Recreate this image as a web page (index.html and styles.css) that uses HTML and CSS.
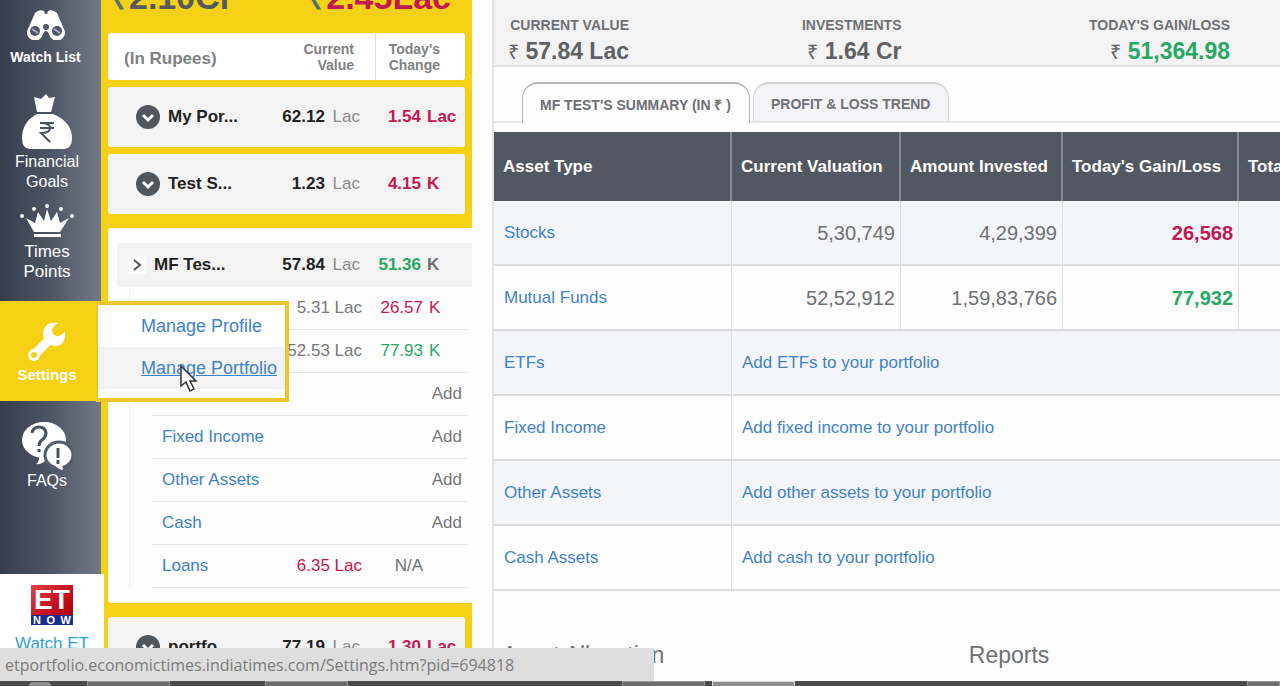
FILE: index.html
```html
<!DOCTYPE html>
<html lang="en">
<head>
	<meta charset="UTF-8">
	<title>ET Portfolio</title>
	<link rel="stylesheet" href="styles.css">
</head>
<body>
	<div id="page">
		<ul id="nav">
			<li class="watch">
				<a href="#">
					<svg width="38" height="30" viewBox="0 0 38 30"><path fill="#fff" d="M8 3q4-4 9-2l1 3h2l1-3q5-2 9 2l7 16a8 8 0 1 1-15 5q-1-3-3-3t-3 3a8 8 0 1 1-15-5z"/><circle cx="8" cy="21" r="5" fill="#4e5767"/><circle cx="30" cy="21" r="5" fill="#4e5767"/><circle cx="19" cy="17" r="3" fill="#4e5767"/><path d="M5 19l6 4M27 19l6 4" stroke="#aab" stroke-width="2"/></svg>
					<b>Watch List</b>
				</a>
			</li>
			<li class="goals">
				<a href="#">
					<svg width="52" height="56" viewBox="0 0 52 56"><path fill="#fff" d="M16 18L13 3l7 2 5-5 3 4 6-1-4 15zM16 20h16q19 8 19 24 0 11-8 11H9q-8 0-8-11 0-16 15-24z"/><path d="M19 29h14M19 34h14M20 29q9 0 9 5t-9 5l9 9" fill="none" stroke="#4a5261" stroke-width="2"/></svg>
					<span>Financial<br>Goals</span>
				</a>
			</li>
			<li class="points">
				<a href="#">
					<svg width="54" height="34" viewBox="0 0 54 34"><path fill="#fff" d="M6 14l9 5 3-11 6 9 3-12 4 12 6-9 3 11 9-5-9 14H14zM14 30h27v3H14z"/><g fill="#fff"><circle cx="2" cy="12" r="2"/><circle cx="14" cy="5" r="2"/><circle cx="27" cy="2" r="2"/><circle cx="41" cy="5" r="2"/><circle cx="52" cy="12" r="2"/></g></svg>
					<span>Times<br>Points</span>
				</a>
			</li>
			<li class="settings">
				<a href="#">
					<svg width="40" height="40" viewBox="0 0 40 40"><path d="M7 33L23 17" stroke="#fff" stroke-width="9"/><circle cx="7" cy="33" r="6" fill="#fff"/><path fill="#fff" d="M31 1q-10-2-14 6-3 8 3 14 6 5 13 2 6-4 5-13-6 5-9 4-4-2-4-6 1-4 6-7z"/><circle cx="7" cy="33" r="3" fill="#f4d114"/></svg>
					<b>Settings</b>
				</a>
				<div id="menu">
					<a href="#">Manage Profile</a>
					<a href="#" class="active">Manage Portfolio</a>
					<svg id="cursor" width="18" height="27" viewBox="0 0 18 27"><path d="M1 1v20l5-4 4 9 4-2-4-8h6z" fill="#fff" stroke="#333" stroke-width="1.5"/></svg>
				</div>
			</li>
			<li class="faq">
				<a href="#">
					<svg width="52" height="50" viewBox="0 0 52 50"><ellipse cx="23" cy="19" rx="22" ry="18" fill="#fff"/><path fill="#fff" d="M18 34v5q-1 3-3 4 6 1 11-5v-4z"/><path d="M11 12q1-6 7-6t7 6q0 4-4 7-3 2-3 6M18 28v3" fill="none" stroke="#4a5261" stroke-width="3"/><ellipse cx="38" cy="34" rx="14" ry="13" fill="#fff" stroke="#555d6c" stroke-width="3"/><path fill="#fff" d="M33 43q3 5 9 6l-1-6z"/><path d="M37 27v10M37 39v4" stroke="#4a5261" stroke-width="3"/></svg>
					<span>FAQs</span>
				</a>
			</li>
			<li class="etnow">
				<a href="#">
					<span class="logo"><b>ET</b><i><u>N</u><u>O</u><u>W</u></i></span>
					<span>Watch ET</span>
				</a>
			</li>
		</ul>

		<div id="list">
			<div class="total">
				<span><small>₹</small>2.10Cr</span>
				<span class="red"><small>₹</small>2.45Lac</span>
			</div>
			<div class="card head">
				<span class="name">(In Rupees)</span>
				<span class="col1">Current<br>Value</span>
				<span class="col2">Today's<br>Change</span>
			</div>
			<div class="card">
				<button type="button" class="arrow" aria-label="Expand"><svg width="24" height="24" viewBox="0 0 24 24"><circle cx="12" cy="12" r="12" fill="#50565b"/><path d="M7 10l5 5 5-5" fill="none" stroke="#fff" stroke-width="3"/></svg></button>
				<b class="name">My Por...</b>
				<span class="val"><b>62.12</b> Lac</span>
				<b class="chg red">1.54</b><b class="unit red">Lac</b>
			</div>
			<div class="card">
				<button type="button" class="arrow" aria-label="Expand"><svg width="24" height="24" viewBox="0 0 24 24"><circle cx="12" cy="12" r="12" fill="#50565b"/><path d="M7 10l5 5 5-5" fill="none" stroke="#fff" stroke-width="3"/></svg></button>
				<b class="name">Test S...</b>
				<span class="val"><b>1.23</b> Lac</span>
				<b class="chg red">4.15</b><b class="unit red">K</b>
			</div>
			<div class="open">
				<div class="title">
					<button type="button" class="arrow" aria-label="Collapse"><svg width="18" height="18" viewBox="0 0 18 18"><path fill="#fff" d="M0 0h18v18H0z"/><path d="M6 4l6 5-6 5" fill="none" stroke="#50565b" stroke-width="2"/></svg></button>
					<b class="name">MF Tes...</b>
					<span class="val"><b>57.84</b> Lac</span>
					<b class="chg green">51.36</b><b class="unit">K</b>
				</div>
				<ul>
					<li><a href="#" class="name">Stocks</a><span class="val">5.31 Lac</span><span class="chg red">26.57</span><span class="unit red">K</span></li>
					<li><a href="#" class="name">Mutual Funds</a><span class="val">52.53 Lac</span><span class="chg green">77.93</span><span class="unit green">K</span></li>
					<li><a href="#" class="name">ETFs</a><a href="#" class="add">Add</a></li>
					<li><a href="#" class="name">Fixed Income</a><a href="#" class="add">Add</a></li>
					<li><a href="#" class="name">Other Assets</a><a href="#" class="add">Add</a></li>
					<li><a href="#" class="name">Cash</a><a href="#" class="add">Add</a></li>
					<li><a href="#" class="name">Loans</a><span class="val red">6.35 Lac</span><span class="chg">N/A</span><span class="unit"></span></li>
				</ul>
			</div>
			<div class="card">
				<button type="button" class="arrow" aria-label="Expand"><svg width="24" height="24" viewBox="0 0 24 24"><circle cx="12" cy="12" r="12" fill="#50565b"/><path d="M7 10l5 5 5-5" fill="none" stroke="#fff" stroke-width="3"/></svg></button>
				<b class="name">portfo...</b>
				<span class="val"><b>77.19</b> Lac</span>
				<b class="chg red">1.30</b><b class="unit red">Lac</b>
			</div>
		</div>

		<div id="main">
			<div class="summary">
				<p>CURRENT VALUE<strong><small>₹</small> 57.84 Lac</strong></p>
				<p>INVESTMENTS<strong><small>₹</small> 1.64 Cr</strong></p>
				<p>TODAY'S GAIN/LOSS<strong class="green"><small>₹</small> 51,364.98</strong></p>
			</div>
			<div class="tabs">
				<button type="button" class="active">MF TEST'S SUMMARY (IN ₹ )</button>
				<button type="button">PROFIT &amp; LOSS TREND</button>
			</div>
			<table>
				<colgroup><col class="c1"><col class="c2"><col class="c3"><col class="c4"><col></colgroup>
				<thead>
					<tr><th>Asset Type</th><th>Current Valuation</th><th>Amount Invested</th><th>Today's Gain/Loss</th><th>Total</th></tr>
				</thead>
				<tbody>
					<tr><td><a href="#">Stocks</a></td><td class="n">5,30,749</td><td class="n">4,29,399</td><td class="n red">26,568</td><td></td></tr>
					<tr><td><a href="#">Mutual Funds</a></td><td class="n">52,52,912</td><td class="n">1,59,83,766</td><td class="n green">77,932</td><td></td></tr>
					<tr><td><a href="#">ETFs</a></td><td colspan="4"><a href="#">Add ETFs to your portfolio</a></td></tr>
					<tr><td><a href="#">Fixed Income</a></td><td colspan="4"><a href="#">Add fixed income to your portfolio</a></td></tr>
					<tr><td><a href="#">Other Assets</a></td><td colspan="4"><a href="#">Add other assets to your portfolio</a></td></tr>
					<tr><td><a href="#">Cash Assets</a></td><td colspan="4"><a href="#">Add cash to your portfolio</a></td></tr>
				</tbody>
			</table>
			<div class="more">
				<h2>Asset Allocation</h2>
				<h2>Reports</h2>
			</div>
		</div>
		<div id="status">etportfolio.economictimes.indiatimes.com/Settings.htm?pid=694818</div>
	</div>
	<div id="taskbar"><i class="start"></i><i></i><i></i><i class="far"></i><i class="on"></i><i class="last"></i></div>
</body>
</html>
```

FILE: styles.css
```css
*{
	padding:0;
	margin:0;
	list-style:none;
	box-sizing:border-box;
}
body{
	display:flex;
	flex-direction:column;
	height:100vh;
	overflow:hidden;
	background-color:#fdfdfd;
	color:#6f7073;
	font-family:"Liberation Sans",Arial,sans-serif;
	font-size:17px;
	line-height:20px;
}
a{
	color:#3f82c8;
	text-decoration:none;
}
button{
	border:0;
	background:none;
	font:inherit;
	color:inherit;
}
svg{
	display:block;
	flex:none;
}
#page{
	display:flex;
	flex:1;
	min-height:0;
	overflow:hidden;
	position:relative;
}
.red,.card .red{
	color:#c41850;
}
.green,.title .green{
	color:#2aa765;
}

/* left navigation */
#nav{
	display:flex;
	flex-direction:column;
	flex:none;
	width:101px;
	position:relative;
	z-index:2;
	background:linear-gradient(to right,#363e4d,#4e5665 50%,#727986);
}
#nav li{
	position:relative;
	flex:none;
}
#nav li > a{
	display:flex;
	flex-direction:column;
	align-items:center;
	padding-right:7px;
	color:#fff;
	text-align:center;
}
#nav .watch{
	height:94px;
	padding-top:10px;
	font-size:14px;
}
#nav .watch a{
	gap:7px;
	padding-right:10px;
}
#nav .goals{
	height:110px;
	font-size:16px;
}
#nav .goals a{
	gap:2px;
}
#nav .points{
	height:97px;
}
#nav .points a{
	gap:4px;
}
#nav .settings{
	height:100px;
	padding-top:21px;
	background-color:#f4d114;
	font-size:15px;
}
#nav .settings > a{
	gap:3px;
}
#nav .faq{
	height:173px;
	padding-top:20px;
	font-size:16px;
}
#nav .etnow{
	flex:1;
	width:104px;
	padding-top:11px;
	background-color:#fff;
}
#nav .etnow a{
	gap:9px;
	padding-right:0;
	color:#2f9fdc;
}
.logo{
	width:42px;
	color:#fff;
	background:linear-gradient(135deg,#e04040,#c00d1a 60%,#900);
}
.logo b{
	display:block;
	font-size:28px;
	line-height:30px;
}
.logo i{
	display:flex;
	justify-content:space-between;
	padding:0 2px;
	background-color:#1c2f8c;
	font-size:11px;
	font-style:normal;
	font-weight:bold;
	line-height:10px;
}
.logo u{
	text-decoration:none;
}
#menu{
	position:absolute;
	left:96px;
	top:0;
	width:193px;
	height:101px;
	border:4px solid #ecc62c;
	border-left-width:2px;
	background-color:#fff;
	font-size:18px;
}
#menu a{
	display:block;
	height:42px;
	padding-left:43px;
	line-height:42px;
}
#menu .active{
	background-color:#f3f3f4;
	text-decoration:underline;
}
#cursor{
	position:absolute;
	left:82px;
	top:60px;
}

/* portfolio list */
#list{
	flex:none;
	width:371px;
	padding-left:7px;
	background-color:#f4d114;
}
.total{
	display:flex;
	justify-content:space-between;
	align-items:flex-start;
	height:33px;
	padding:0 21px 0 4px;
	color:#55585c;
	font-size:34px;
	font-weight:bold;
}
.total span{
	margin-top:-13px;
}
.total small{
	color:#55706a;
	font-size:30px;
}
.card{
	display:flex;
	align-items:center;
	height:60px;
	margin:0 7px 7px 0;
	padding-left:28px;
	border-radius:3px;
	background-color:#f3f3f3;
}
.card.head{
	height:47px;
	padding:5px 0 0 16px;
	background-color:#fff;
	color:#808184;
	font-weight:bold;
}
.head .col1,.head .col2{
	height:47px;
	margin-top:-5px;
	padding:8px 21px 0 0;
	font-size:14px;
	line-height:16px;
	text-align:right;
}
.head .col2{
	width:90px;
	padding-right:25px;
	border-left:1px solid #ddd;
}
.arrow{
	margin-right:8px;
}
.name{
	flex:1;
}
b.name,.val b{
	color:#222;
}
.val{
	color:#8a8b8d;
}
.val b{
	margin-right:3px;
}
.chg{
	width:61px;
	text-align:right;
}
.unit{
	width:44px;
	padding-left:6px;
}
.open{
	height:375px;
	margin:14px -19px 14px 0;
	padding:15px 19px 0 0;
	border-radius:3px 0 0 3px;
	background-color:#fdfdfd;
}
.title{
	display:flex;
	align-items:center;
	height:44px;
	margin-left:9px;
	padding:0 7px 0 11px;
	background-color:#f3f3f3;
}
.open ul{
	margin:0 5px 0 21px;
	padding-left:22px;
	border-left:1px solid #f0f0f0;
}
.open li{
	display:flex;
	align-items:center;
	height:43px;
	padding-left:10px;
	border-bottom:1px solid #e6e6e6;
}
.open .add{
	padding-right:5px;
	color:#77787b;
}
.open li .val{
	color:#77787b;
}
.open li .red{
	color:#c41850;
}

/* summary and table */
#main{
	flex:1;
	min-width:0;
	margin-left:20px;
	border-left:2px solid #e4e4e4;
	overflow:hidden;
}
.summary{
	display:grid;
	grid-template-columns:135px 1fr 1fr;
	height:67px;
	padding:15px 50px 0 0;
	border-bottom:2px solid #e2e2e2;
	background-color:#f3f3f4;
	font-size:14px;
	font-weight:bold;
}
.summary p{
	text-align:right;
}
.summary p:nth-child(2){
	padding-right:28px;
}
.summary strong{
	display:block;
	font-size:23px;
	line-height:32px;
	color:#5f6165;
}
.summary strong.green{
	color:#2aa765;
}
.summary small{
	color:#5f6165;
	font-size:20px;
	font-weight:normal;
}
.tabs{
	display:flex;
	gap:3px;
	height:56px;
	margin-bottom:9px;
	padding:15px 0 0 28px;
	border-bottom:2px solid #e6e6e6;
}
.tabs button{
	height:39px;
	padding:3px 18px 0 17px;
	border:1px solid #d4d5d7;
	border-width:2px 1px 0;
	border-radius:16px 16px 0 0;
	background-color:#f4f4f6;
	font-size:14px;
	font-weight:bold;
}
.tabs .active{
	height:41px;
	border-color:#b4b5b7;
	background-color:#fdfdfd;
}
table{
	width:100%;
	table-layout:fixed;
	border-collapse:separate;
	border-spacing:0;
}
.c1{
	width:238px;
}
.c2{
	width:169px;
}
.c3{
	width:162px;
}
.c4{
	width:176px;
}
th{
	height:69px;
	padding-left:9px;
	border-right:2px solid #858b95;
	background-color:#525861;
	color:#fff;
	text-align:left;
	white-space:nowrap;
}
td{
	height:65px;
	padding-left:10px;
	border-right:1px solid #e0e0e2;
	border-bottom:2px solid #dcdcde;
}
tbody tr:nth-child(odd) td{
	background-color:#f4f5f8;
}
td:last-child,th:last-child{
	border-right:0;
}
.n{
	padding-right:5px;
	font-size:20px;
	text-align:right;
}
.n.red,.n.green{
	font-weight:bold;
}
.more{
	display:grid;
	grid-template-columns:60% 1fr;
	padding:52px 0 0 8px;
}
.more h2{
	font-size:23px;
	font-weight:normal;
	line-height:24px;
}

/* browser status bar and taskbar */
#status{
	position:absolute;
	left:0;
	bottom:0;
	z-index:3;
	width:654px;
	height:33px;
	padding-left:5px;
	background-color:#dedede;
	color:#7b7b7b;
	font-family:"Open Sans",sans-serif;
	font-size:16px;
	line-height:34px;
}
#taskbar{
	display:flex;
	flex:none;
	height:5px;
	background-color:#4b4b4b;
}
#taskbar i{
	width:83px;
	margin-right:95px;
	border:1px solid #999;
	border-bottom:0;
	background-color:#6c6c6c;
}
#taskbar .start{
	width:22px;
	margin:1px 36px 0 29px;
	border:0;
	border-radius:11px 11px 0 0;
	background-color:#8c8c8c;
}
#taskbar .far{
	margin:0 7px 0 179px;
}
#taskbar .on{
	margin-right:auto;
	border-color:#ddd;
	background-color:#8e8e8e;
}
#taskbar .last{
	width:33px;
	margin-right:0;
}
```
